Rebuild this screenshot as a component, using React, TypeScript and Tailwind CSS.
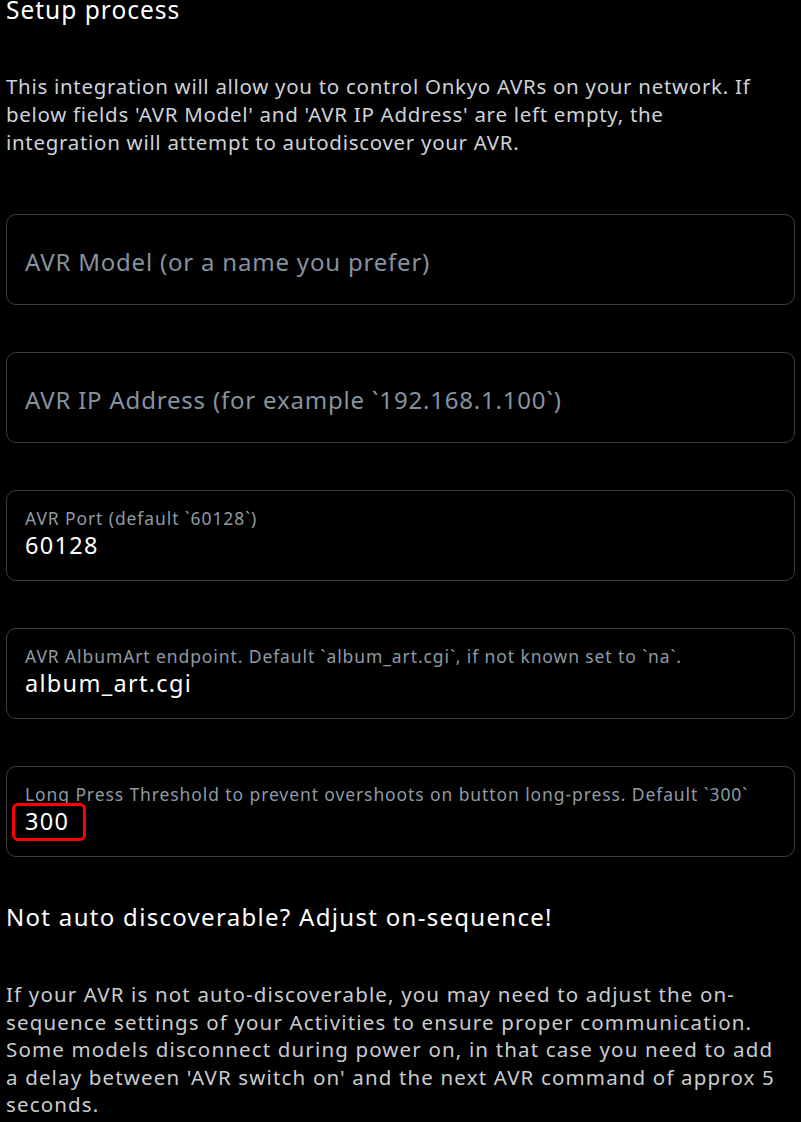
import React from 'react';

const font = { fontFamily: '"Noto Sans", "Open Sans", sans-serif' };

const EmptyField: React.FC<{ placeholder: string }> = ({ placeholder }) => (
  <div className="h-[91px] rounded-[10px] border border-[#3b3d3f] flex items-center px-[18px]">
    <input
      className="mt-[5px] w-full bg-transparent outline-none text-[24px] tracking-[0.8px] text-white placeholder:text-[#8593a0]"
      placeholder={placeholder}
    />
  </div>
);

const FilledField: React.FC<{ label: string; value: string; highlight?: boolean }> = ({ label, value, highlight }) => (
  <div className="relative h-[91px] rounded-[10px] border border-[#3b3d3f] px-[18px] pt-[15px]">
    <div className="text-[17.5px] leading-[24px] tracking-[0.9px] text-[#8e9aa4] whitespace-nowrap">{label}</div>
    <input
      className="w-full bg-transparent outline-none text-[23.5px] leading-[30px] tracking-[1.3px] text-white"
      defaultValue={value}
    />
    {highlight && (
      <div className="absolute left-[5px] top-[36px] w-[74px] h-[38px] rounded-[6px] border-[3px] border-[#ff0000]" />
    )}
  </div>
);

export default function App() {
  return (
    <div className="min-h-screen bg-black px-[6px] pb-[10px] overflow-hidden" style={font}>
      <h2 className="-mt-[4px] text-[24.5px] leading-[28px] tracking-[1px] text-white">Setup process</h2>

      <p className="mt-[48px] pr-[28px] text-[20.5px] leading-[28px] tracking-[0.7px] text-[#cdd3d8]">
        This integration will allow you to control Onkyo AVRs on your network. If below fields 'AVR Model' and
        'AVR IP Address' are left empty, the integration will attempt to autodiscover your AVR.
      </p>

      <div className="mt-[58px] flex flex-col gap-[47px]">
        <EmptyField placeholder="AVR Model (or a name you prefer)" />
        <EmptyField placeholder="AVR IP Address (for example `192.168.1.100`)" />
        <FilledField label="AVR Port (default `60128`)" value="60128" />
        <FilledField
          label="AVR AlbumArt endpoint. Default `album_art.cgi`, if not known set to `na`."
          value="album_art.cgi"
        />
        <FilledField
          label="Long Press Threshold to prevent overshoots on button long-press. Default `300`"
          value="300"
          highlight
        />
      </div>

      <h2 className="mt-[46px] text-[24px] leading-[28px] tracking-[1.3px] text-white">
        Not auto discoverable? Adjust on-sequence!
      </h2>

      <p className="mt-[50px] pr-[10px] text-[20.5px] leading-[27.5px] tracking-[1.15px] text-[#c9ccce]">
        If your AVR is not auto-discoverable, you may need to adjust the on-sequence settings of your Activities to
        ensure proper communication. Some models disconnect during power on, in that case you need to add a delay
        between 'AVR switch on' and the next AVR command of approx 5 seconds.
      </p>
    </div>
  );
}
